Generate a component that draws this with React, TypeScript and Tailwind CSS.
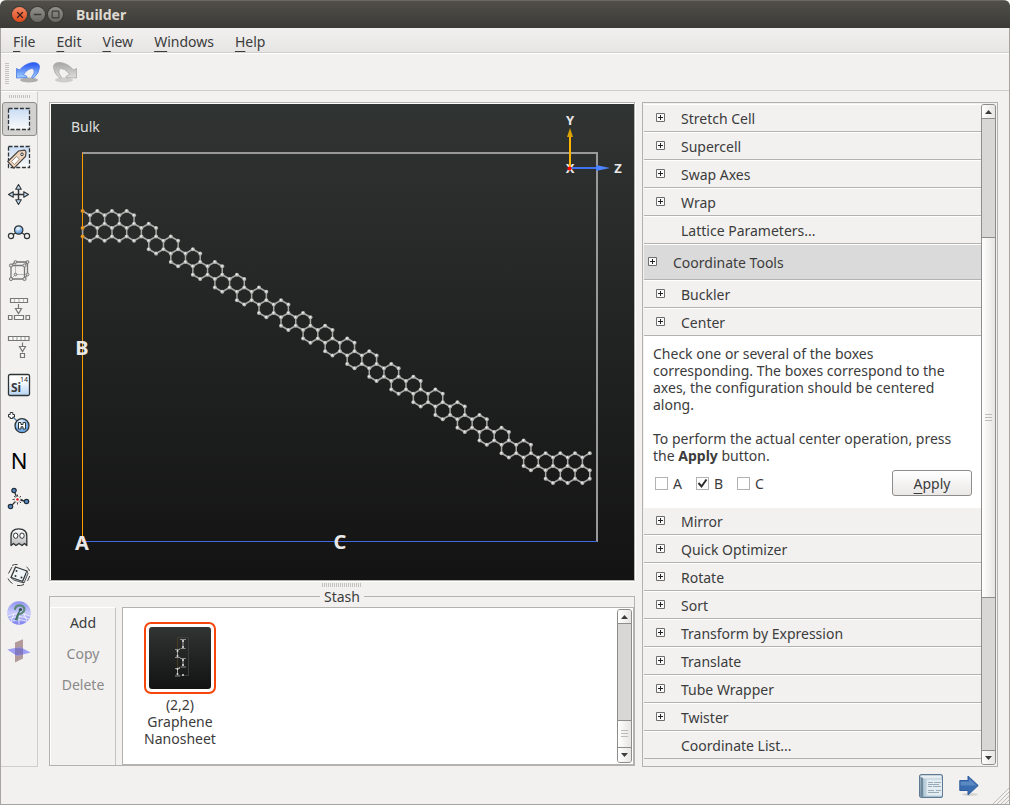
import type { ReactNode } from 'react'
import { Minus, Square, X } from 'lucide-react'
import { clsx } from 'clsx'

const menus = ['File', 'Edit', 'View', 'Windows', 'Help']

const latticeTools = ['Stretch Cell', 'Supercell', 'Swap Axes', 'Wrap']
const coordinateTools = [
  'Mirror',
  'Quick Optimizer',
  'Rotate',
  'Sort',
  'Transform by Expression',
  'Translate',
  'Tube Wrapper',
  'Twister',
]

// zigzag step and half height of one row of the honeycomb
const STEP = 7.35
const RISE = 4.25

type Point = [number, number]

function buildSheet() {
  const atoms = new Map<string, Point>()
  const bonds = new Map<string, [Point, Point]>()
  const key = ([x, y]: Point) => `${Math.round(x)},${Math.round(y)}`

  const addBond = (a: Point, b: Point) => {
    atoms.set(key(a), a)
    atoms.set(key(b), b)
    bonds.set([key(a), key(b)].sort().join('|'), [a, b])
  }
  // col counts half cells from the left edge of the unit cell
  const addHexagon = (row: number, col: number) => {
    const at = (c: number, r: number): Point => [31.6 + (col + c) * STEP, 115.5 + (row * 3 + r) * RISE]
    const ring = [at(0, -2), at(1, -1), at(1, 1), at(0, 2), at(-1, 1), at(-1, -1)]
    ring.forEach((p, i) => addBond(p, ring[(i + 1) % 6]))
  }

  for (const col of [2, 4, 6]) addHexagon(0, col)
  for (const col of [1, 3, 5, 7, 9]) addHexagon(1, col)
  for (let row = 2; row <= 18; row++) {
    addHexagon(row, 10 + (row - 2) * 3)
    addHexagon(row, 12 + (row - 2) * 3)
  }
  for (const col of [61, 63, 65, 67]) addHexagon(19, col)
  for (const col of [64, 66, 68]) addHexagon(20, col)
  addBond([31.6, 107], [31.6 + STEP, 111.25])
  addBond([31.6 + 68 * STEP, 353.5], [31.6 + 69 * STEP, 349.25])

  return { atoms: [...atoms.values()], bonds: [...bonds.values()] }
}

const sheet = buildSheet()

function Viewport() {
  return (
    <div className="min-h-0 flex-1 border border-[#b4b2af] bg-white pt-px pl-px shadow-[1px_1px_0_#fff]">
      <svg className="block h-full w-full bg-linear-to-b from-[#303432] to-[#131313]" viewBox="0 0 583 476" preserveAspectRatio="xMinYMin meet" role="img" aria-label="Bulk configuration" fontFamily="'Noto Sans', sans-serif">
        <text x="20" y="28" fontSize="14" fill="#dedede">Bulk</text>
        <path d="M31 49H546V438" fill="none" stroke="#999" strokeWidth="2" />
        <path d="M32 437.5H546" stroke="#4169e1" />
        <path d="M31.5 49V438" stroke="#ff9c00" />
        <g stroke="#a8a8a6" strokeWidth="1.5">
          {sheet.bonds.map(([a, b], i) => (
            <line key={i} x1={a[0]} y1={a[1]} x2={b[0]} y2={b[1]} />
          ))}
        </g>
        <g fill="#b4b4b2">
          {sheet.atoms.map(([x, y], i) => (
            <circle key={i} cx={x} cy={y} r="2" fill={x < 32 ? '#d08a20' : undefined} />
          ))}
        </g>
        <g fill="#f4f4f2">
          {sheet.atoms.map(([x, y], i) => (
            <circle key={i} cx={x - 0.3} cy={y - 0.3} r="0.9" fill={x < 32 ? '#ffae30' : undefined} />
          ))}
        </g>
        <g fill="#e8e8e8" fontWeight="bold" textAnchor="middle">
          <text x="31" y="251" fontSize="20">B</text>
          <text x="31" y="446" fontSize="20">A</text>
          <text x="289" y="445" fontSize="20">C</text>
          <text x="519" y="21" fontSize="13">Y</text>
          <text x="519" y="69" fontSize="13">X</text>
          <text x="567" y="69" fontSize="13">Z</text>
        </g>
        <path d="M519 64H546" stroke="#3f73ee" strokeWidth="2" />
        <path d="M545 61L559 64L545 67Z" fill="#4d83ff" />
        <path d="M519 65V32" stroke="#ffb400" strokeWidth="2" />
        <path d="M516 33L519 24L522 33Z" fill="#d9a400" />
        <circle cx="518.500" cy="64.500" r="2" fill="#f00" />
      </svg>
    </div>
  )
}

function IconSvg({ children }: { children: ReactNode }) {
  return (
    <svg className="h-6 w-6" viewBox="0 0 24 24" fill="none" aria-hidden="true">
      {children}
    </svg>
  )
}

const tools: { label: string; icon: ReactNode }[] = [
  {
    label: 'Select',
    icon: (
      <IconSvg>
        <rect x="1.500" y="1.500" width="21" height="21" fill="url(#sky)" stroke="#2e3436" strokeDasharray="4 1.700" strokeWidth="1.300" />
      </IconSvg>
    ),
  },
  {
    label: 'Select by tag',
    icon: (
      <IconSvg>
        <rect x="1.500" y="1.500" width="21" height="21" fill="url(#sky)" stroke="#2e3436" strokeDasharray="4 1.700" strokeWidth="1.300" />
        <path d="M.8 16.500L11.500 6L17.500 5.200Q19 5.500 19 7.500L18.500 11.500L7 23.200Z" fill="#eed5c0" stroke="#4c4640" strokeWidth="1.200" />
        <path d="M4.500 16.500L9.500 11.500L12.500 14L7.500 19.500Z" fill="#fff" stroke="#8a7868" strokeWidth=".8" />
        <circle cx="15" cy="9.300" r="1.300" fill="#fff" stroke="#333" />
      </IconSvg>
    ),
  },
  {
    label: 'Move',
    icon: (
      <IconSvg>
        <path d="M11.500 5V18M5 11.500H18" stroke="#2e3436" strokeWidth="1.500" />
        <path d="M11.500 1.500L14.300 6.200H8.700ZM11.500 21.500L14.300 16.800H8.700ZM1.500 11.500L6.200 8.700V14.300ZM21.500 11.500L16.800 8.700V14.300Z" fill="#c5dcf5" stroke="#2e3436" strokeWidth="1.100" strokeLinejoin="round" />
      </IconSvg>
    ),
  },
  {
    label: 'Bond',
    icon: (
      <IconSvg>
        <path d="M4 15L11.500 10L20 15" stroke="#2e3436" strokeWidth="1.300" />
        <circle cx="11.700" cy="9" r="4.200" fill="url(#ball)" stroke="#2e3436" strokeWidth="1.200" />
        <circle cx="4" cy="15" r="2.600" fill="#f2f2f0" stroke="#2e3436" strokeWidth="1.200" />
        <circle cx="20" cy="15" r="2.600" fill="#f2f2f0" stroke="#2e3436" strokeWidth="1.200" />
      </IconSvg>
    ),
  },
  {
    label: 'Unit cell',
    icon: (
      <IconSvg>
        <path d="M8.500 3H20.500V15.500H8.500ZM4 20L8.500 15.500" stroke="#b9b9b7" />
        <path d="M4 6.500H17.500V20H4ZM4 6.500L8.500 3H20.500L17.500 6.500M20.500 3V15.500L17.500 20" stroke="#777" strokeWidth="1.300" />
        <g fill="#ddd" stroke="#777">
          <circle cx="4" cy="6.500" r="1.600" />
          <circle cx="17.500" cy="6.500" r="1.600" />
          <circle cx="4" cy="20" r="1.600" />
          <circle cx="17.500" cy="20" r="1.600" />
          <circle cx="8.500" cy="3" r="1.400" />
          <circle cx="20.500" cy="3" r="1.400" />
          <circle cx="20.500" cy="15.500" r="1.400" />
          <circle cx="8.500" cy="15.500" r="1.300" />
        </g>
      </IconSvg>
    ),
  },
  {
    label: 'Split',
    icon: (
      <IconSvg>
        <g stroke="#777" strokeWidth="1.200" fill="#f8f8f7">
          <path d="M3.500 1.500H20.500V5.500H3.500Z" />
          <path d="M7.500 2V5M12 2V5M16.500 2V5" stroke="#bbb" />
          <path d="M11.500 7V13" />
          <path d="M8.500 11.500H14.500L11.500 16.500Z" />
          <path d="M1.500 18.500H5V22.500H1.500ZM7.500 18.500H16.500V22.500H7.500ZM19 18.500H22.500V22.500H19Z" />
        </g>
      </IconSvg>
    ),
  },
  {
    label: 'Extract',
    icon: (
      <IconSvg>
        <g stroke="#777" strokeWidth="1.200" fill="#f8f8f7">
          <path d="M1.500 1.500H22V5.500H1.500Z" />
          <path d="M6 2V5M10 2V5M14 2V5M18 2V5" stroke="#aaa" />
          <path d="M15.500 7.500V13" />
          <path d="M12.500 11.500H18.500L15.500 16.500Z" />
          <path d="M13.500 18.500H17.500V22.500H13.500Z" />
        </g>
      </IconSvg>
    ),
  },
  {
    label: 'Set element',
    icon: (
      <IconSvg>
        <rect x="1.500" y="1.500" width="21" height="21" rx="1.500" fill="url(#tile)" stroke="#2e3436" strokeWidth="1.300" />
        <text x="4" y="19" fontSize="12" fontWeight="bold" fill="#3a3a3a" fontFamily="'Noto Sans', sans-serif">Si</text>
        <text x="13" y="9" fontSize="7" fill="#222" fontFamily="'Noto Sans', sans-serif">14</text>
      </IconSvg>
    ),
  },
  {
    label: 'Passivate',
    icon: (
      <IconSvg>
        <path d="M6 6L10 10" stroke="#5a82a8" strokeWidth="1.500" />
        <path d="M3.200 1.500H5.800V3.500H7.500V6H5.800V7.500H3.200V6H1.500V3.500H3.200Z" fill="#fff" stroke="#2e3436" />
        <circle cx="15" cy="14.700" r="7" fill="url(#ball)" stroke="#2e3436" strokeWidth="1.300" />
        <path d="M11.500 11.500H14V13.500H16V11.500H18.500V18H16V15.800H14V18H11.500Z" fill="#fff" stroke="#2e3436" />
      </IconSvg>
    ),
  },
  { label: 'Nitrogen', icon: <span className="h-6 text-[22px] leading-[22px] text-black">N</span> },
  {
    label: 'Relax structure',
    icon: (
      <IconSvg>
        <path d="M10.500 12.500L7 3.500M10.500 12.500L3.500 19.500M10.500 12.500L19.500 14.500" stroke="#2e3436" strokeWidth="1.300" />
        <path d="M10.500 7.500V17.500M5.500 12.500H15.500M7 9L14 16M14 9L7 16" stroke="#444" />
        <circle cx="10.500" cy="12.500" r="3" fill="#fff" stroke="#888" strokeWidth=".6" />
        <circle cx="10.500" cy="12.500" r="1.300" fill="#e01010" />
        <g fill="#5b8bc4" stroke="#1f2d3a" strokeWidth="1.200">
          <circle cx="7" cy="3.500" r="2.200" />
          <circle cx="3.500" cy="19.500" r="2.200" />
          <circle cx="19.500" cy="14.500" r="2.200" />
        </g>
      </IconSvg>
    ),
  },
  {
    label: 'Ghost atoms',
    icon: (
      <IconSvg>
        <path d="M4 20.500V11Q4 3.800 11.700 3.800Q19.800 3.800 19.800 11V20.500L17.500 18.500L15 20.500L12 18.500L9 20.500L6.500 18.500Z" fill="url(#ghost)" stroke="#2e3436" strokeWidth="1.300" strokeLinejoin="round" />
        <ellipse cx="8.700" cy="10.700" rx="2.200" ry="2.700" fill="#fff" stroke="#2e3436" />
        <ellipse cx="15" cy="10.700" rx="2.200" ry="2.700" fill="#fff" stroke="#2e3436" />
      </IconSvg>
    ),
  },
  {
    label: 'Rattle',
    icon: (
      <IconSvg>
        <path d="M8.500 4L20 8L15.500 18.500L4 14.500Z" fill="#f0f5f8" stroke="#2e3436" strokeWidth="1.300" strokeLinejoin="round" />
        <path d="M4 14.500L6.500 17L17 20L15.500 18.500ZM20 8L21 10.500L17 20" fill="#c8d2d8" stroke="#2e3436" strokeWidth=".8" strokeLinejoin="round" />
        <path d="M5 2.500Q7.500 1 10.500 1.500M1.500 10.500L5 4M1 15.500Q2.500 19 5.500 20.500M10 22.500Q14 23 17 21.500M19.500 4Q22 5.500 22.500 8M20.500 18L22.800 13" stroke="#444" />
        <circle cx="9.500" cy="8" r="1" fill="#333" />
        <circle cx="8.500" cy="13" r="1" fill="#333" />
        <circle cx="14.500" cy="14.500" r="1" fill="#333" />
      </IconSvg>
    ),
  },
  {
    label: 'Symmetry',
    icon: (
      <IconSvg>
        <circle cx="12" cy="12" r="11.800" fill="url(#orb)" />
        <path d="M1 15Q12 10 23 15M2 18Q12 13 22 18M4 20.500Q12 17 20 20.500M7 13L4 20M12 12.500V23.500M17 13L20 20" stroke="#fff" strokeOpacity=".7" />
        <path d="M8 8Q9 4 14 4.500Q18.500 6 17 10Q15 13 11 13.500L10 18.500" stroke="#5c8a78" strokeWidth="2.200" strokeLinecap="round" />
        <circle cx="13.500" cy="8.500" r="1.600" fill="#2f4f50" />
        <path d="M13 9L8.500 19" stroke="#3f6a62" strokeWidth="1.500" />
      </IconSvg>
    ),
  },
  {
    label: 'Mirror planes',
    icon: (
      <IconSvg>
        <path d="M8 3.500L16 .3V19.500L8 23.500Z" fill="#b39a9a" />
        <path d="M.3 10.500L13 8L23.700 13.500L10 17Z" fill="#8f8ff5" fillOpacity=".85" />
        <path d="M8 9L16 9.500V15.500L8 16Z" fill="#7468a6" fillOpacity=".6" />
      </IconSvg>
    ),
  },
]

function Gradients() {
  return (
    <svg className="absolute h-0 w-0" aria-hidden="true">
      <defs>
        <linearGradient id="sky" x2="0" y2="1">
          <stop offset="0" stopColor="#c9dcf4" />
          <stop offset="1" stopColor="#fbfbfa" />
        </linearGradient>
        <linearGradient id="tile" x2="0" y2="1">
          <stop offset="0.300" stopColor="#fff" />
          <stop offset="1" stopColor="#b5d3f3" />
        </linearGradient>
        <linearGradient id="ghost" x2="0" y2="1">
          <stop offset="0" stopColor="#fff" />
          <stop offset="1" stopColor="#b8b8b8" />
        </linearGradient>
        <radialGradient id="ball" cx="0.400" cy="0.300">
          <stop offset="0.200" stopColor="#e8f2fc" />
          <stop offset="1" stopColor="#6fa9e6" />
        </radialGradient>
        <linearGradient id="orb" x2="0" y2="1">
          <stop offset="0" stopColor="#8f92f0" />
          <stop offset="0.500" stopColor="#c9ccfa" />
          <stop offset="1" stopColor="#7c80ee" />
        </linearGradient>
        <linearGradient id="undo" x2="0" y2="1">
          <stop offset="0" stopColor="#2350f0" />
          <stop offset="1" stopColor="#a4d4ff" />
        </linearGradient>
        <linearGradient id="redo" x2="0" y2="1">
          <stop offset="0" stopColor="#a5a5a3" />
          <stop offset="1" stopColor="#dededc" />
        </linearGradient>
        <linearGradient id="book" x2="0" y2="1">
          <stop offset="0" stopColor="#eef4f7" />
          <stop offset="1" stopColor="#9fb8c8" />
        </linearGradient>
      </defs>
    </svg>
  )
}

function CurvedArrow({ active }: { active?: boolean }) {
  return (
    <svg className={clsx('h-6 w-6', !active && '-scale-x-100')} viewBox="0 0 24 24" aria-hidden="true">
      <ellipse cx="13" cy="19" rx="9" ry="2.500" fill="#000" fillOpacity={active ? 0.28 : 0.15} />
      <path
        d="M.5 7.500L3.500 9Q9.500 2 17 1.500Q24 1.500 23.500 6.500Q23 12.500 17.500 17L15.500 16.500Q19.500 11.500 18 8.500Q16.500 6.500 12.500 8.500Q9 10.500 7.500 13.500L11 15.500V16.500L.5 17Z"
        fill={active ? 'url(#undo)' : 'url(#redo)'}
        stroke={active ? '#4a78e8' : '#a8a8a6'}
        strokeWidth=".8"
      />
    </svg>
  )
}

function Grip({ className }: { className: string }) {
  return <div className={clsx('bg-[repeating-linear-gradient(90deg,#c4c2bf_0_1px,transparent_1px_2px)]', className)} />
}

function Scrollbar({ before, thumb, after }: { before: number; thumb: number; after: number }) {
  const button = 'flex h-[14px] shrink-0 items-center justify-center bg-linear-to-r from-white to-[#e6e5e3]'
  return (
    <div className="flex w-[15px] shrink-0 flex-col rounded-[3px] border border-[#8e8d8b] bg-[#d8d7d5]">
      <button type="button" aria-label="Scroll up" className={clsx(button, 'rounded-t-[2px] border-b border-[#8e8d8b]')}>
        <svg className="h-1 w-[7px]" viewBox="0 0 7 4" aria-hidden="true"><path d="M0 4L3.500 0L7 4Z" fill="#3c3c3c" /></svg>
      </button>
      <div className="basis-0" style={{ flexGrow: before }} />
      <div
        className="flex basis-0 flex-col items-center justify-center gap-[2px] border-y border-[#8e8d8b] bg-linear-to-r from-white to-[#e6e5e3]"
        style={{ flexGrow: thumb }}
      >
        <span className="h-px w-[7px] bg-[#bdbbb8]" />
        <span className="h-px w-[7px] bg-[#bdbbb8]" />
        <span className="h-px w-[7px] bg-[#bdbbb8]" />
      </div>
      <div className="basis-0" style={{ flexGrow: after }} />
      <button type="button" aria-label="Scroll down" className={clsx(button, 'rounded-b-[2px]', after > 0 && 'border-t border-[#8e8d8b]')}>
        <svg className="h-1 w-[7px]" viewBox="0 0 7 4" aria-hidden="true"><path d="M0 0L3.500 4L7 0Z" fill="#3c3c3c" /></svg>
      </button>
    </div>
  )
}

function PlusBox() {
  return (
    <svg className="mt-[3px] h-[9px] w-[9px] shrink-0" viewBox="0 0 9 9" aria-hidden="true">
      <path d="M.5 .5H8.500V8.500H.5Z" fill="#fafafa" stroke="#6e6e6e" />
      <path d="M2 4.500H7M4.500 2V7" stroke="#222" />
    </svg>
  )
}

function ToolRow({ label, plain }: { label: string; plain?: boolean }) {
  return (
    <button
      type="button"
      className={clsx(
        'flex h-7 w-full shrink-0 items-start gap-4 border-b border-b-[#b4b2af] pt-[6px] text-left shadow-[inset_0_1px_0_#fff]',
        plain ? 'pl-[37px]' : 'pl-3',
      )}
    >
      {!plain && <PlusBox />}
      {label}
    </button>
  )
}

function AxisCheckbox({ axis, checked }: { axis: string; checked?: boolean }) {
  return (
    <label className="flex w-[41px] items-center gap-[5px]">
      <span className="relative flex h-[13px] w-[13px]">
        <input type="checkbox" defaultChecked={checked} className="peer h-[13px] w-[13px] appearance-none border border-[#b4b2af] bg-white" />
        <svg className="pointer-events-none absolute inset-0 hidden h-[13px] w-[13px] peer-checked:block" viewBox="0 0 13 13" aria-hidden="true">
          <path d="M2.500 6L5.500 9.500L10.500 2.500" fill="none" stroke="#2c2c2c" strokeWidth="2" />
        </svg>
      </span>
      {axis}
    </label>
  )
}

function CenterPanel() {
  return (
    <form className="shrink-0 bg-white px-[9px] pt-[9px] pb-3" onSubmit={(e) => e.preventDefault()}>
      <p className="mb-[17px]">
        Check one or several of the boxes corresponding. The boxes correspond to the axes, the configuration should be centered along.
      </p>
      <p>
        To perform the actual center operation, press the <b>Apply</b> button.
      </p>
      <div className="mt-[6px] flex h-[26px] items-center pl-[2px]">
        <AxisCheckbox axis="A" />
        <AxisCheckbox axis="B" checked />
        <AxisCheckbox axis="C" />
        <button type="submit" className="ml-auto h-[26px] w-20 rounded-[3px] border border-[#8e8d8b] bg-linear-to-b from-white to-[#eae8e7]">
          <span className="underline underline-offset-4">A</span>pply
        </button>
      </div>
    </form>
  )
}

function ToolPanel() {
  return (
    <aside className="flex w-[356px] shrink-0 border border-[#b4b2af] p-px">
      <div className="flex min-w-0 flex-1 flex-col overflow-hidden">
        {latticeTools.map((label) => <ToolRow key={label} label={label} />)}
        <ToolRow label="Lattice Parameters..." plain />
        <button type="button" className="flex h-9 shrink-0 items-start gap-4 border-b border-b-[#b4b2af] bg-[#dadada] pt-[10px] pl-1 text-left shadow-[inset_0_1px_0_#fff]">
          <PlusBox />
          Coordinate Tools
        </button>
        <ToolRow label="Buckler" />
        <ToolRow label="Center" />
        <CenterPanel />
        <div className="-mt-px">
          {coordinateTools.map((label) => <ToolRow key={label} label={label} />)}
          <ToolRow label="Coordinate List..." plain />
        </div>
      </div>
      <Scrollbar before={119} thumb={360} after={153} />
    </aside>
  )
}

function Stash() {
  return (
    <fieldset className="mb-px min-w-0 shrink-0 border border-[#b4b2af]">
      <legend className="mx-auto px-1">Stash</legend>
      <div className="mt-[2px] flex h-[158px] gap-[6px]">
        <div className="flex w-[66px] flex-col gap-[3px] border-t border-r border-l border-t-white border-r-[#c6c4c1] border-l-white">
          <button type="button" className="h-7">Add</button>
          <button type="button" className="h-7 text-[#8a8988]" disabled>Copy</button>
          <button type="button" className="h-7 text-[#8a8988]" disabled>Delete</button>
        </div>
        <div className="flex min-w-0 flex-1 border border-[#b4b2af] bg-white p-px">
          <div className="flex-1 pt-[13px] pl-[11px]">
            <figure className="flex w-[90px] flex-col items-center">
              <div className="h-[72px] w-[72px] rounded-[7px] border-2 border-[#f5470b] p-[3px]">
                <svg className="block h-full w-full" viewBox="0 0 62 62" aria-hidden="true">
                  <defs>
                    <linearGradient id="thumb" x2="0" y2="1">
                      <stop offset="0" stopColor="#303432" />
                      <stop offset="1" stopColor="#131313" />
                    </linearGradient>
                  </defs>
                  <rect width="62" height="62" rx="3" fill="url(#thumb)" />
                  <path d="M28.500 10.500H39.500V48.500H28.500Z" fill="none" stroke="#3c3e3c" />
                  <path d="M28.500 11V48" stroke="#4a3c20" />
                  <path d="M34 13V21M28.500 23V30M34 32V39M28.500 42V48M31 31L34 32M31 22L28.500 23M31 40L28.500 42" fill="none" stroke="#a4a4a2" />
                  <path d="M31 12.500H37M31.500 21.500H36.500M26 22.500H31M26 30.500H31M31.500 31.500H37M31.500 40H37M26 41.500H31M26 49H31" stroke="#8e8e8c" />
                  <g fill="#ddd">
                    {[[34, 14], [34, 20], [28.5, 24], [28.5, 29], [34, 33], [34, 38], [28.5, 42], [28.5, 47], [34, 48]].map(([x, y]) => (
                      <circle key={`${x}-${y}`} cx={x} cy={y} r="1" />
                    ))}
                  </g>
                </svg>
              </div>
              <figcaption className="mt-[2px] text-center">(2,2) Graphene Nanosheet</figcaption>
            </figure>
          </div>
          <Scrollbar before={98} thumb={27} after={0} />
        </div>
      </div>
    </fieldset>
  )
}

export default function App() {
  return (
    <div className="flex h-screen flex-col overflow-hidden rounded-t-[6px] bg-[#f2f1f0] font-['Noto_Sans',sans-serif] text-[14px] leading-[17px] text-[#3c3c3c]">
      <Gradients />
      <header className="flex h-7 shrink-0 items-center gap-[3px] border-t border-[#6a6861] bg-linear-to-b from-[#504e48] to-[#3c3b37] pl-3">
        <button type="button" aria-label="Close" className="flex h-[15px] w-[15px] items-center justify-center rounded-full bg-linear-to-b from-[#f58560] to-[#dd4814] text-[#3a2018] ring-1 ring-[#3a3934]">
          <X size={10} strokeWidth={3} />
        </button>
        <button type="button" aria-label="Minimize" className="flex h-[15px] w-[15px] items-center justify-center rounded-full bg-linear-to-b from-[#92908a] to-[#6b6963] text-[#3c3b37] ring-1 ring-[#3a3934]">
          <Minus size={11} strokeWidth={3} />
        </button>
        <button type="button" aria-label="Maximize" className="flex h-[15px] w-[15px] items-center justify-center rounded-full bg-linear-to-b from-[#92908a] to-[#6b6963] text-[#3c3b37] ring-1 ring-[#3a3934]">
          <Square size={9} strokeWidth={3} />
        </button>
        <h1 className="ml-[10px] font-bold text-[#dfdbd2]">Builder</h1>
      </header>

      <div className="flex min-h-0 flex-1 flex-col border-r border-b border-l border-[#a8a49f]">
        <nav className="flex h-[25px] shrink-0 items-center gap-px border-b border-[#d0cecc] bg-linear-to-b from-[#f2f1f0] to-[#e6e5e4] pt-[2px] pl-[2px]">
          {menus.map((menu) => (
            <button key={menu} type="button" className="px-[10px]">
              <span className="underline underline-offset-4">{menu[0]}</span>
              {menu.slice(1)}
            </button>
          ))}
        </nav>

        <div className="flex h-[38px] shrink-0 items-center border-t border-b border-t-white border-b-[#d0cecc] pt-[2px] pl-1">
          <div className="h-[21px] w-1 bg-[repeating-linear-gradient(#c4c2bf_0_1px,transparent_1px_2px)]" />
          <button type="button" aria-label="Undo" className="ml-[7px]"><CurvedArrow active /></button>
          <button type="button" aria-label="Redo" className="ml-[13px]" disabled><CurvedArrow /></button>
        </div>

        <main className="flex min-h-0 flex-1">
          <div className="flex w-[37px] shrink-0 flex-col items-center gap-1 border-t border-r border-b border-t-white border-r-[#d0cecc] border-b-[#d0cecc] pt-[3px]">
            <Grip className="h-[3px] w-[21px]" />
            {tools.map(({ label, icon }, i) => (
              <button
                key={label}
                type="button"
                aria-label={label}
                className={clsx(
                  'flex h-[34px] w-[35px] shrink-0 items-center justify-center rounded-[3px] border',
                  i === 0 ? 'border-[#8e8d8b] bg-[#d2d1cf]' : 'border-transparent',
                )}
              >
                {icon}
              </button>
            ))}
          </div>

          <div className="flex min-w-0 flex-1 gap-[7px] pt-[11px] pr-[11px] pl-[11px]">
            <div className="flex min-w-0 flex-1 flex-col">
              <Viewport />
              <Grip className="mx-auto mt-[2px] mb-px h-1 w-10 shrink-0" />
              <Stash />
            </div>
            <ToolPanel />
          </div>
        </main>

        <footer className="flex h-[37px] shrink-0 items-center justify-end">
          <button type="button" aria-label="Script" className="mr-4">
            <IconSvg>
              <rect x=".6" y=".6" width="22.800" height="22.800" rx="2" fill="url(#book)" stroke="#5d7a92" strokeWidth="1.200" />
              <path d="M1.500 2.500L4.500 4.500V22.500H1.500Z" fill="#6d879c" />
              <path d="M4.500 4.500H23V22.500H4.500Z" fill="#b9cedb" />
              <path d="M7.500 5.500H23V21.500H7.500Z" fill="#e3ecf1" />
              <path d="M9 8.500H14M15 8.500H22M9 10.500H20M9 12.500H13M14 12.500H22M9 16.500H15M17 16.500H22M9 18.500H20" stroke="#9aabb8" />
            </IconSvg>
          </button>
          <button type="button" aria-label="Send to">
            <svg className="h-[22px] w-5" viewBox="0 0 20 22" aria-hidden="true">
              <ellipse cx="11" cy="19.500" rx="8" ry="1.500" fill="#000" fillOpacity=".12" />
              <path d="M.8 5.500H9V1L19.200 10.500L9 20V15.500H.8Z" fill="#3a6db0" stroke="#2f5d9e" />
              <path d="M1.500 6.500H10V3.500L17.500 10.500H1.500Z" fill="#6f9bd0" fillOpacity=".6" />
            </svg>
          </button>
          <svg className="ml-[13px] h-[17px] w-[17px] self-end" viewBox="0 0 17 17" aria-hidden="true">
            <path d="M1 17L17 1M5 17L17 5M9 17L17 9M13 17L17 13" stroke="#bfbdba" />
          </svg>
        </footer>
      </div>
    </div>
  )
}
